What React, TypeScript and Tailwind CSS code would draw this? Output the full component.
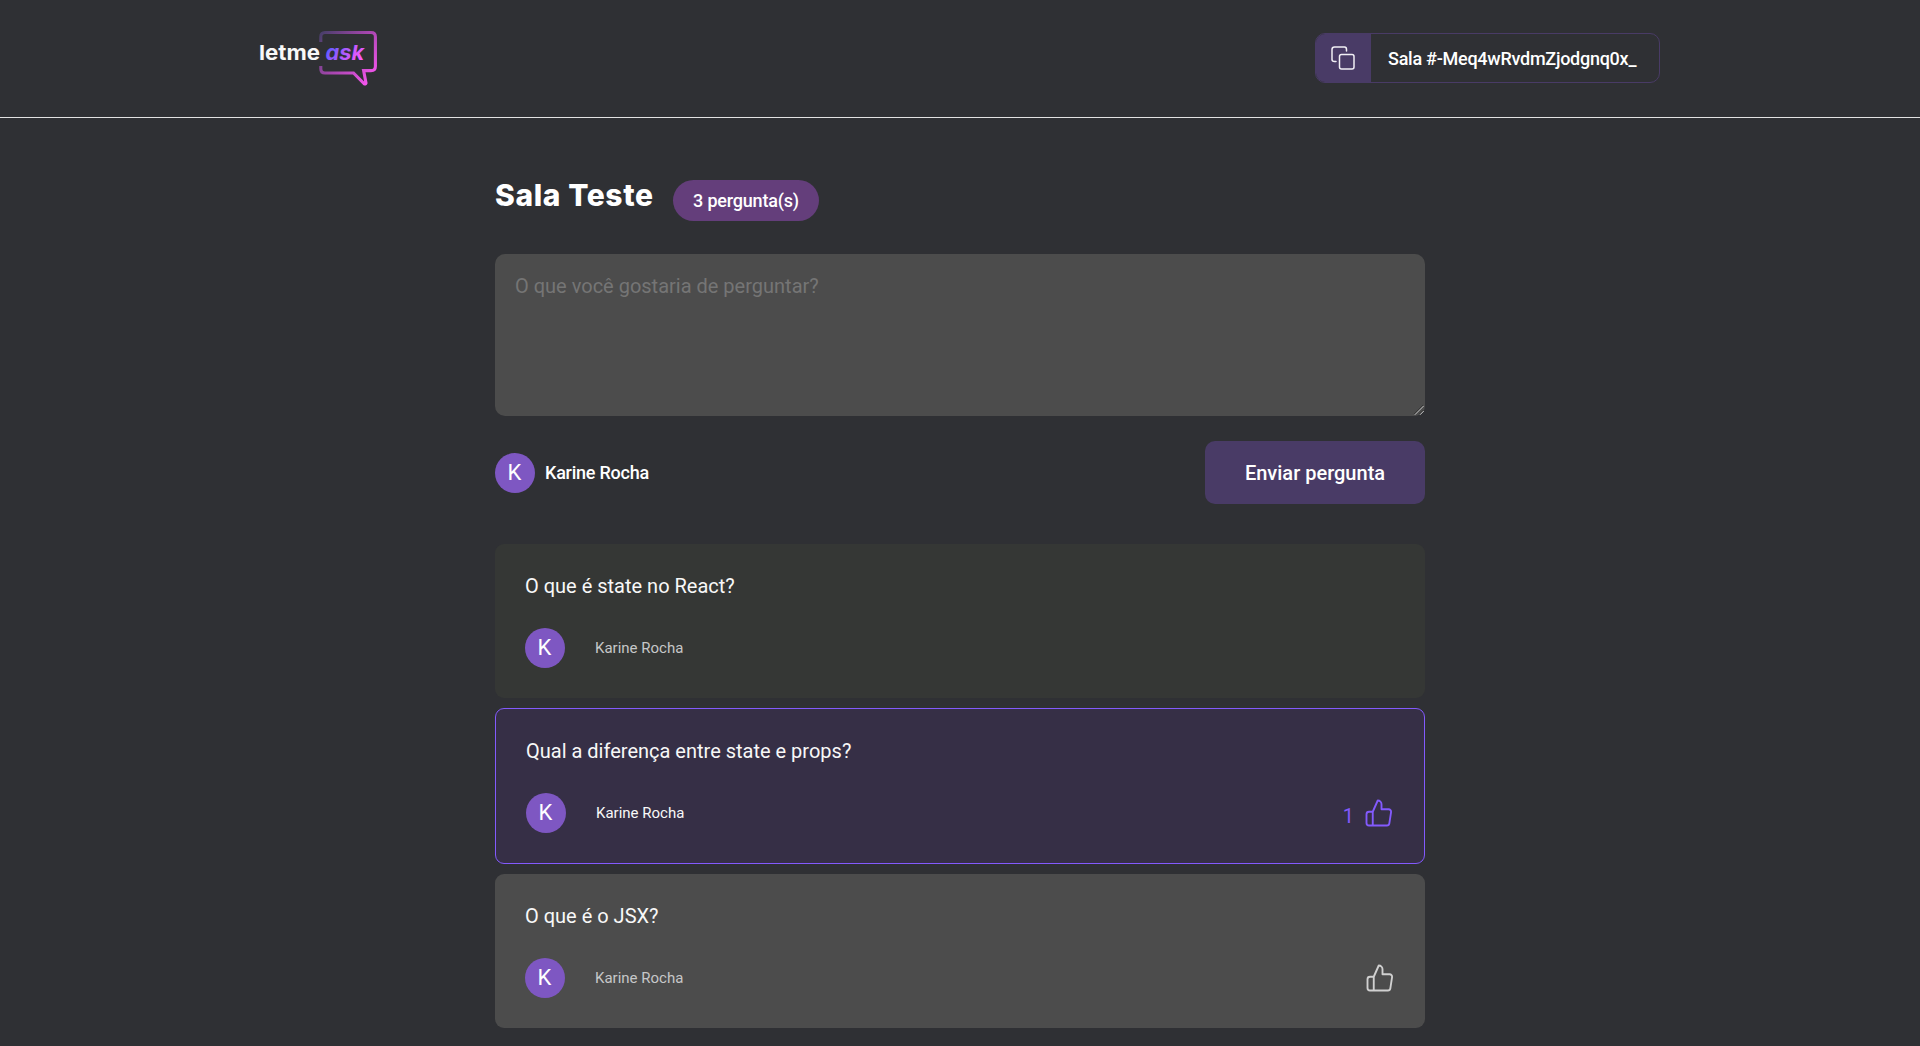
import React from "react";

function Logo() {
  return (
    <svg width="120" height="56" viewBox="0 0 120 56" fill="none">
      <defs>
        <linearGradient id="bubble" x1="62" y1="4" x2="112" y2="50" gradientUnits="userSpaceOnUse">
          <stop offset="0" stopColor="#4b3f6b" />
          <stop offset="0.5" stopColor="#a646ae" />
          <stop offset="1" stopColor="#f555ee" />
        </linearGradient>
        <linearGradient id="ask" x1="68" y1="12" x2="98" y2="36" gradientUnits="userSpaceOnUse">
          <stop offset="0" stopColor="#485bff" />
          <stop offset="0.5" stopColor="#a85bff" />
          <stop offset="1" stopColor="#ff59f8" />
        </linearGradient>
      </defs>
      <path
        d="M61.8 12V6.8Q61.8 2.5 66 2.5H112Q116.4 2.5 116.4 6.8V36.2Q116.4 40.6 112 40.6H104.6L107 53Q106.6 54.6 105 53.6L94.5 43H66Q61.8 43 61.8 38.7V36"
        stroke="url(#bubble)"
        strokeWidth="3.1"
      />
      <text x="0" y="30" fill="#f8f8f8" fontSize="20.5" fontWeight="700" fontFamily="Inter, sans-serif" textLength="61" lengthAdjust="spacingAndGlyphs">letme</text>
      <text x="66.5" y="30" fill="url(#ask)" fontSize="20.5" fontWeight="700" fontStyle="italic" fontFamily="Inter, sans-serif" textLength="38.5" lengthAdjust="spacingAndGlyphs">ask</text>
    </svg>
  );
}

function CopyIcon() {
  return (
    <svg width="24" height="24" viewBox="0 0 24 24" fill="none" stroke="#f1eff5" strokeWidth="1.5" strokeLinecap="round" strokeLinejoin="round">
      <rect x="8.5" y="8.5" width="14.5" height="14.5" rx="2" />
      <path d="M5 15.5H3.5Q1 15.5 1 13.5V3.5Q1 1 3.5 1H13.5Q15.5 1 15.5 3.5V5" />
    </svg>
  );
}

function LikeIcon() {
  return (
    <svg width="30" height="30" viewBox="0 0 24 24" fill="none" stroke="currentColor" strokeWidth="1.5" strokeLinecap="round" strokeLinejoin="round">
      <path d="M7 22H4a2 2 0 0 1-2-2v-7a2 2 0 0 1 2-2h3M14 9V5a3 3 0 0 0-3-3L7 11v11h11.28a2 2 0 0 0 2-1.7l1.38-9a2 2 0 0 0-2-2.3H14Z" />
    </svg>
  );
}

function Avatar() {
  return (
    <div className="flex size-10 shrink-0 items-center justify-center rounded-full bg-[#7e57c2] pr-px text-[22px] leading-none text-white">
      K
    </div>
  );
}

type QuestionProps = { text: string; card: string; name: string; like?: React.ReactNode };

function Question({ text, card, name, like }: QuestionProps) {
  return (
    <div className={"rounded-[9px] p-[30px] " + card}>
      <p className="text-[20px] leading-6 text-[#f8f8f8]">{text}</p>
      <div className="mt-[30px] flex items-center justify-between">
        <div className="flex items-center gap-[30px]">
          <Avatar />
          <span className={"text-[15px] " + name}>Karine Rocha</span>
        </div>
        {like}
      </div>
    </div>
  );
}

export default function App() {
  return (
    <div className="h-[1046px] overflow-hidden bg-[#2f3034] font-['Roboto',sans-serif] text-white">
      <header className="h-[118px] border-b border-[#e2e2e2]">
        <div className="mx-auto flex w-[1402px] justify-between pr-px">
          <div className="pt-[30px]">
            <Logo />
          </div>
          <button className="mt-[33px] flex h-[50px] w-[345px] overflow-hidden rounded-[10px] border border-[#493b66]">
            <span className="flex h-full w-[55px] items-center justify-center bg-[#493b66] pr-px">
              <CopyIcon />
            </span>
            <span className="flex h-full flex-1 items-center pl-[17px] text-[18px] font-medium tracking-[-0.26px]">Sala #-Meq4wRvdmZjodgnq0x_</span>
          </button>
        </div>
      </header>
      <main className="mx-auto w-[930px]">
        <div className="flex items-start gap-5 pt-[62px]">
          <h1 className="-mt-0.5 w-[158px] font-['Inter',sans-serif] text-[30px] leading-[34px] font-extrabold tracking-[0.6px] whitespace-nowrap">Sala Teste</h1>
          <span className="flex h-[41px] w-[146px] items-center justify-center rounded-full bg-[#643e7b] text-[18px] font-medium tracking-[-0.2px]">3 pergunta(s)</span>
        </div>
        <div className="relative mt-[33px]">
          <textarea
            className="block h-[162px] w-full resize-none rounded-[10px] bg-[#4c4c4c] px-5 py-5 text-[20px] leading-6 placeholder:text-[#757575]"
            placeholder="O que você gostaria de perguntar?"
          />
          <svg className="absolute right-px bottom-px" width="10" height="10" viewBox="0 0 10 10" strokeWidth="1">
            <path d="M0 9.2L9.2 0M5.2 9.2L9.2 5.2" stroke="#303030" />
            <path d="M0.8 9.8L9.8 0.8M6 9.8L9.8 6" stroke="#c4c4c4" />
          </svg>
        </div>
        <div className="mt-[25px] flex items-center justify-between">
          <div className="flex items-center gap-2.5">
            <Avatar />
            <span className="text-[18px] font-medium tracking-[-0.24px]">Karine Rocha</span>
          </div>
          <button className="h-[63px] w-[220px] rounded-[10px] bg-[#493b66] text-[20px] font-medium">Enviar pergunta</button>
        </div>
        <div className="mt-10 flex flex-col gap-2.5">
          <Question text="O que é state no React?" card="bg-[#353735]" name="text-[#c6c7c8]" />
          <Question
            text="Qual a diferença entre state e props?"
            card="border border-[#835afd] bg-[#362f46]"
            name="text-[#f8f8f8]"
            like={
              <div className="flex items-end gap-2.5 text-[20px] leading-6 text-[#835afd]">
                <span>1</span>
                <LikeIcon />
              </div>
            }
          />
          <Question text="O que é o JSX?" card="bg-[#4c4c4c]" name="text-[#c6c7c8]" like={<div className="text-[#d0d0d0]"><LikeIcon /></div>} />
        </div>
      </main>
    </div>
  );
}
